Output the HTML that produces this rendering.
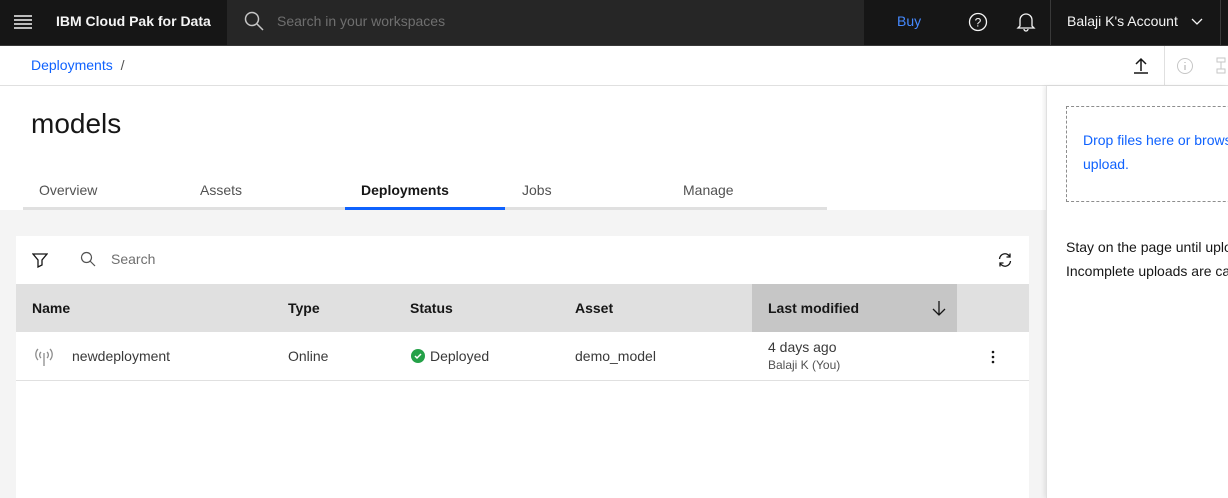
<!DOCTYPE html>
<html><head><style>
*{margin:0;padding:0;box-sizing:border-box}
body{width:1228px;height:498px;overflow:hidden;font-family:"Liberation Sans",sans-serif;background:#fff;position:relative;color:#161616}
.abs{position:absolute}
.t{font-size:14px;white-space:nowrap}
</style></head><body>
<!-- header -->
<div class="abs" style="left:0;top:0;width:1228px;height:46px;background:#161616;border-bottom:1px solid #393939"></div>
<div class="abs" style="left:227px;top:0;width:637px;height:45px;background:#262626"></div>
<div class="abs" style="left:1050px;top:0;width:1px;height:45px;background:#393939"></div>
<div class="abs" style="left:1220px;top:0;width:1px;height:45px;background:#393939"></div>
<svg class="abs" style="left:14px;top:14px" width="18" height="16"><g stroke="#f4f4f4" stroke-width="1.5"><line x1="0" y1="2" x2="18" y2="2"/><line x1="0" y1="6" x2="18" y2="6"/><line x1="0" y1="10" x2="18" y2="10"/><line x1="0" y1="14" x2="18" y2="14"/></g></svg>
<div class="abs t" style="left:56px;top:13px;color:#f4f4f4;font-weight:bold;font-size:14px">IBM Cloud Pak for Data</div>
<svg class="abs" style="left:244px;top:11px" width="20" height="20"><circle cx="8" cy="8" r="6.5" stroke="#c6c6c6" stroke-width="1.5" fill="none"/><line x1="13" y1="13" x2="19" y2="19" stroke="#c6c6c6" stroke-width="1.5"/></svg>
<div class="abs t" style="left:277px;top:13px;color:#6f6f6f">Search in your workspaces</div>
<div class="abs t" style="left:897px;top:13px;color:#4589ff">Buy</div>
<svg class="abs" style="left:968px;top:12px" width="20" height="20"><circle cx="10" cy="10" r="8.5" stroke="#f4f4f4" stroke-width="1.3" fill="none"/><text x="10" y="14.5" font-size="12" fill="#f4f4f4" text-anchor="middle" font-family="Liberation Sans">?</text></svg>
<svg class="abs" style="left:1016px;top:11px" width="20" height="22"><path d="M4 15V9a6 6 0 0 1 12 0v6l2 2H2z M8 18a2 2 0 0 0 4 0" stroke="#f4f4f4" stroke-width="1.3" fill="none"/></svg>
<div class="abs t" style="left:1067px;top:13px;color:#f4f4f4">Balaji K's Account</div>
<svg class="abs" style="left:1191px;top:18px" width="12" height="8"><path d="M1 1l5 5 5-5" stroke="#f4f4f4" stroke-width="1.3" fill="none"/></svg>
<!-- breadcrumb -->
<div class="abs" style="left:0;top:85px;width:1228px;height:1px;background:#e0e0e0"></div>
<div class="abs t" style="left:31px;top:57px;color:#0f62fe">Deployments <span style="color:#525252;margin-left:4px">/</span></div>
<div class="abs" style="left:1164px;top:46px;width:1px;height:39px;background:#e0e0e0"></div>
<svg class="abs" style="left:1132px;top:57px" width="18" height="18"><path d="M9 14V2M4 7l5-5 5 5M2 16h14" stroke="#161616" stroke-width="1.5" fill="none"/></svg>
<svg class="abs" style="left:1176px;top:57px" width="18" height="18"><circle cx="9" cy="9" r="7.5" stroke="#c6c6c6" fill="none"/><path d="M9 8v5M9 5v1" stroke="#c6c6c6" stroke-width="1.5"/></svg>
<svg class="abs" style="left:1216px;top:57px" width="12" height="18"><path d="M1 1h8v4H1zM1 12h8v4H1zM5 5v7" stroke="#c6c6c6" fill="none"/></svg>
<!-- main -->
<div class="abs" style="left:0;top:210px;width:1046px;height:288px;background:#f4f4f4"></div>
<div class="abs" style="left:31px;top:108px;font-size:28px;color:#161616">models</div>
<div class="abs" style="left:23px;top:207px;width:804px;height:3px;background:#e0e0e0"></div>
<div class="abs" style="left:345px;top:207px;width:160px;height:3px;background:#0f62fe"></div>
<div class="abs t" style="left:39px;top:182px;color:#525252">Overview</div>
<div class="abs t" style="left:200px;top:182px;color:#525252">Assets</div>
<div class="abs t" style="left:361px;top:182px;color:#161616;font-weight:bold">Deployments</div>
<div class="abs t" style="left:522px;top:182px;color:#525252">Jobs</div>
<div class="abs t" style="left:683px;top:182px;color:#525252">Manage</div>
<!-- table -->
<div class="abs" style="left:16px;top:236px;width:1013px;height:262px;background:#fff"></div>
<svg class="abs" style="left:32px;top:252px" width="16" height="16"><path d="M1 2h14l-5 6v5l-4 2V8z" stroke="#161616" stroke-width="1.3" fill="none"/></svg>
<svg class="abs" style="left:80px;top:251px" width="16" height="16"><circle cx="6.5" cy="6.5" r="5" stroke="#525252" stroke-width="1.2" fill="none"/><line x1="10" y1="10" x2="15" y2="15" stroke="#525252" stroke-width="1.2"/></svg>
<div class="abs t" style="left:111px;top:251px;color:#6f6f6f">Search</div>
<svg class="abs" style="left:997px;top:252px" width="16" height="16"><path d="M2.5 7A5.5 5.5 0 0 1 13 5M13.5 9A5.5 5.5 0 0 1 3 11M13 1.5V5H9.5M3 14.5V11h3.5" stroke="#161616" stroke-width="1.3" fill="none"/></svg>
<div class="abs" style="left:16px;top:284px;width:1013px;height:48px;background:#e0e0e0"></div>
<div class="abs" style="left:752px;top:284px;width:205px;height:48px;background:#c6c6c6"></div>
<div class="abs t" style="left:32px;top:300px;font-weight:bold">Name</div>
<div class="abs t" style="left:288px;top:300px;font-weight:bold">Type</div>
<div class="abs t" style="left:410px;top:300px;font-weight:bold">Status</div>
<div class="abs t" style="left:575px;top:300px;font-weight:bold">Asset</div>
<div class="abs t" style="left:768px;top:300px;font-weight:bold">Last modified</div>
<svg class="abs" style="left:931px;top:300px" width="16" height="17"><path d="M8 1v14M2 9l6 6 6-6" stroke="#161616" stroke-width="1.3" fill="none"/></svg>
<div class="abs" style="left:16px;top:380px;width:1013px;height:1px;background:#e0e0e0"></div>
<svg class="abs" style="left:34px;top:347px" width="20" height="20"><path d="M4 2a8 8 0 0 0 0 11M16 2a8 8 0 0 1 0 11M7 5a4 4 0 0 0 0 6M13 5a4 4 0 0 1 0 6M10 6v13" stroke="#8d8d8d" stroke-width="1.3" fill="none"/></svg>
<div class="abs t" style="left:72px;top:348px;color:#393939">newdeployment</div>
<div class="abs t" style="left:288px;top:348px;color:#393939">Online</div>
<svg class="abs" style="left:411px;top:349px" width="14" height="14"><circle cx="7" cy="7" r="7" fill="#24a148"/><path d="M4 7l2 2 4-4" stroke="#fff" stroke-width="1.5" fill="none"/></svg>
<div class="abs t" style="left:430px;top:348px;color:#393939">Deployed</div>
<div class="abs t" style="left:575px;top:348px;color:#393939">demo_model</div>
<div class="abs t" style="left:768px;top:339px;color:#393939">4 days ago</div>
<div class="abs" style="left:768px;top:358px;font-size:12px;color:#525252">Balaji K (You)</div>
<svg class="abs" style="left:990px;top:350px" width="6" height="14"><circle cx="3" cy="2" r="1.3" fill="#161616"/><circle cx="3" cy="7" r="1.3" fill="#161616"/><circle cx="3" cy="12" r="1.3" fill="#161616"/></svg>
<!-- right panel -->
<div class="abs" style="left:1046px;top:86px;width:182px;height:412px;background:#fff;border-left:1px solid #e0e0e0;box-shadow:-2px 0 4px rgba(0,0,0,.08)"></div>
<div class="abs" style="left:1066px;top:106px;width:180px;height:96px;border:1px dashed #8d8d8d"></div>
<div class="abs t" style="left:1083px;top:128px;color:#0f62fe;line-height:24px">Drop files here or browse<br>upload.</div>
<div class="abs t" style="left:1066px;top:235px;color:#161616;line-height:24px">Stay on the page until uploads<br>Incomplete uploads are cancelled</div>
</body></html>
